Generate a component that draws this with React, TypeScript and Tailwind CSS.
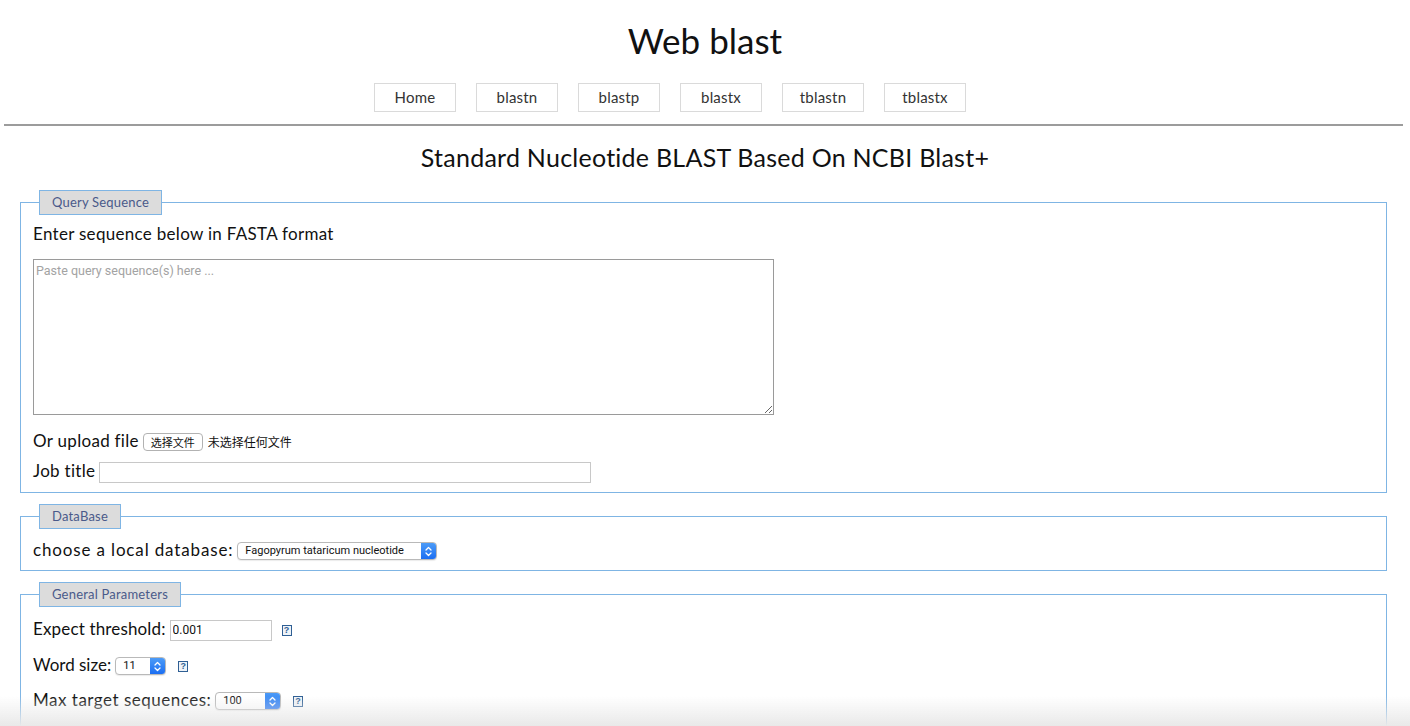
import type { ReactNode } from "react";

const navItems = ["Home", "blastn", "blastp", "blastx", "tblastn", "tblastx"];

const gothic = "font-['Lato','Noto_Sans','DejaVu_Sans',sans-serif]";
const system = "font-['Roboto','Liberation_Sans','Noto_Sans_CJK_SC',sans-serif]";
const label = "text-[17px] tracking-[0.3px]";

function Legend({ children }: { children: ReactNode }) {
  return (
    <legend className="ml-[6px] h-[25px] border border-[#7fb5e4] bg-[#dcdcdc] px-[12px] text-[13px] leading-[23px] tracking-[0.2px] text-[#4a5a8a]">
      {children}
    </legend>
  );
}

function Help() {
  return (
    <span className="inline-flex h-[11px] w-[10px] items-center justify-center border border-[#2f5f94] bg-[#eef3f8] font-['Liberation_Sans',sans-serif] text-[9px] font-bold leading-none text-[#2f5f94]">
      ?
    </span>
  );
}

function FakeSelect({ value, width }: { value: string; width: string }) {
  return (
    <span
      className={`${width} ${system} inline-flex h-[18px] items-stretch overflow-hidden rounded-[4px] border border-[#b9b9b9] bg-white tracking-normal shadow-[0_1px_1px_rgba(0,0,0,0.08)]`}
    >
      <span className="flex flex-1 items-center truncate pl-[7px] text-[11px] text-[#111]">{value}</span>
      <span className="flex w-[15px] items-center justify-center bg-gradient-to-b from-[#4c9bf7] to-[#1b6ef2]">
        <svg width="7" height="11" viewBox="0 0 7 11" fill="none" stroke="white" strokeWidth="1.3" strokeLinecap="round" strokeLinejoin="round">
          <path d="M1 4 L3.5 1.5 L6 4" />
          <path d="M1 7 L3.5 9.5 L6 7" />
        </svg>
      </span>
    </span>
  );
}

export default function App() {
  return (
    <div className={`${gothic} relative min-h-screen bg-white text-[#111]`}>
      <h1 className="mt-[20px] text-center text-[35px] leading-[40px] text-[#111]">Web blast</h1>

      <nav className="mt-[23px] flex justify-center gap-[20px] pr-[70px]">
        {navItems.map((item) => (
          <a
            key={item}
            href="#"
            className="flex h-[29px] w-[82px] items-center justify-center border border-[#dadada] text-[15px] tracking-[0.2px] text-[#333]"
          >
            {item}
          </a>
        ))}
      </nav>

      <div className="ml-[4px] mr-[7px] mt-[12px] h-[2px] bg-[#9c9c9c]" />

      <h2 className="mt-[16px] text-center text-[25px] leading-[30px] tracking-[0.25px] text-[#111]">
        Standard Nucleotide BLAST Based On NCBI Blast+
      </h2>

      <form className="mt-[18px] flex flex-col gap-[11px] pb-[40px]">
        <fieldset className="ml-[20px] mr-[23px] border border-[#7fb5e4] px-[12px] pb-[10px]">
          <Legend>Query Sequence</Legend>
          <p className={`${label} mt-[7px] leading-[24px]`}>Enter sequence below in FASTA format</p>
          <textarea
            placeholder="Paste query sequence(s) here ..."
            className={`${system} mt-[13px] block h-[156px] w-[741px] border border-[#9a9a9a] px-[2px] py-[2px] text-[12.5px] outline-none placeholder:text-[#a3a3a3]`}
          />
          <div className={`${label} mt-[15px] flex h-[22px] items-center`}>
            <span>Or upload file</span>
            <button
              type="button"
              className="ml-[4px] mt-[2px] h-[18px] rounded-[4px] border border-[#b2b2b2] bg-white px-[7px] font-['Noto_Sans_CJK_SC',sans-serif] text-[11px] leading-[16px] tracking-normal text-[#111]"
            >
              选择文件
            </button>
            <span className="ml-[5px] mt-[2px] font-['Noto_Sans_CJK_SC',sans-serif] text-[12px] tracking-normal">未选择任何文件</span>
          </div>
          <div className={`${label} mt-[8px] flex h-[22px] items-center`}>
            <span>Job title</span>
            <input type="text" className="ml-[4px] mt-[2px] h-[21px] w-[492px] border border-[#c8c8c8] outline-none" />
          </div>
        </fieldset>

        <fieldset className="ml-[20px] mr-[23px] border border-[#7fb5e4] px-[12px] pb-[9px]">
          <Legend>DataBase</Legend>
          <div className="mt-[10px] flex h-[22px] items-center text-[17px] tracking-[0.85px]">
            <span>choose a local database:</span>
            <span className="ml-[4px] mt-[2px] flex">
              <FakeSelect value="Fagopyrum tataricum nucleotide" width="w-[200px]" />
            </span>
          </div>
        </fieldset>

        <fieldset className="ml-[20px] mr-[23px] border border-[#7fb5e4] px-[12px] pb-[30px]">
          <Legend>General Parameters</Legend>
          <div className="mt-[11px] flex h-[22px] items-center text-[17px] tracking-[0.15px]">
            <span>Expect threshold:</span>
            <input
              type="text"
              defaultValue="0.001"
              className={`${system} ml-[4px] mt-[2px] h-[21px] w-[102px] border border-[#c8c8c8] px-[2px] text-[12px] tracking-normal outline-none`}
            />
            <span className="ml-[10px] mt-[2px] flex">
              <Help />
            </span>
          </div>
          <div className="mt-[14px] flex h-[22px] items-center text-[17px] tracking-[0px]">
            <span>Word size:</span>
            <span className="ml-[4px] mt-[2px] flex">
              <FakeSelect value="11" width="w-[51px]" />
            </span>
            <span className="ml-[12px] mt-[2px] flex">
              <Help />
            </span>
          </div>
          <div className="mt-[13px] flex h-[22px] items-center text-[17px] tracking-[0.5px]">
            <span>Max target sequences:</span>
            <span className="ml-[4px] mt-[2px] flex">
              <FakeSelect value="100" width="w-[66px]" />
            </span>
            <span className="ml-[12px] mt-[2px] flex">
              <Help />
            </span>
          </div>
        </fieldset>
      </form>

      <div className="pointer-events-none fixed inset-x-0 bottom-0 h-[30px] bg-gradient-to-t from-[#e9e9e9] to-transparent" />
    </div>
  );
}
